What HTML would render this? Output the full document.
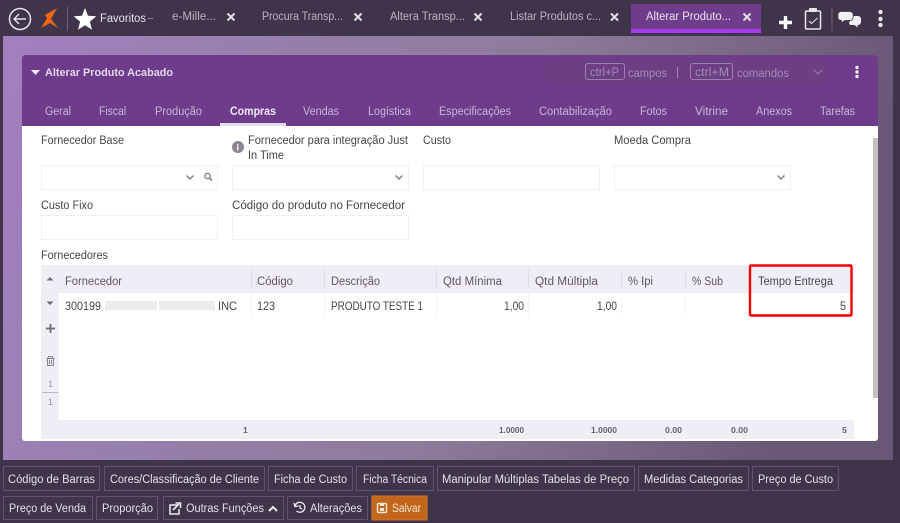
<!DOCTYPE html>
<html lang="pt"><head><meta charset="utf-8"><title>Alterar Produto Acabado</title>
<style>
html,body{margin:0;padding:0;width:900px;height:523px;overflow:hidden;background:#40344a}
svg{display:block;filter:blur(.35px)}
text{font-family:"Liberation Sans",sans-serif;font-size:11.5px}
.top{fill:#b9b2bf;font-size:11.5px}
.tab{fill:#c9b6d6;font-size:11.5px;font-weight:normal}
.lab{fill:#44444c;font-size:11.5px}
.hd{fill:#5c5763;font-size:11.5px}
.cell{fill:#44444a;font-size:11.5px}
.ft{fill:#66626b;font-size:8.5px;font-weight:bold}
.btn{fill:#e4e0e8;font-size:11.5px}
.bb{fill:none;stroke:#5f5569;stroke-width:1}
.inp{fill:#fff;stroke:#f1eff8;stroke-width:1}
.sep{stroke:#dedbe2;stroke-width:1}
.dot{stroke:#e8e6ea;stroke-width:1;stroke-dasharray:1 1}
.x{stroke:#e4e0e8;stroke-width:2;fill:none}
.chev{stroke:#85808a;stroke-width:1.5;fill:none}
.hint{fill:#a48bb6;font-size:11.5px}
</style></head><body>
<svg width="900" height="523" viewBox="0 0 900 523" xmlns="http://www.w3.org/2000/svg">
<defs>
<linearGradient id="bg" x1="0" y1="0" x2="1" y2="0.15"><stop offset="0" stop-color="#a37fc1"/><stop offset=".25" stop-color="#9780ae"/><stop offset=".6" stop-color="#8d7b9a"/><stop offset="1" stop-color="#695875"/></linearGradient>
</defs>
<rect width="900" height="523" fill="#40344a"/>
<rect x="3" y="36" width="890" height="424" fill="url(#bg)"/>

<!-- top bar -->
<circle cx="20" cy="19" r="10.500" fill="none" stroke="#e6e3e8" stroke-width="1.500"/>
<path d="M26 19H14M19 14l-5 5 5 5" fill="none" stroke="#e6e3e8" stroke-width="1.400"/>
<path d="M41 28l6-10-2-3 12-7-6 11 7 9-8-5z" fill="#f0660f"/>
<line x1="67.500" y1="7" x2="67.500" y2="31" stroke="#6d6376"/>
<path d="M85 8l3 7.800 8.300.5-6.400 5.300 2.100 8.100-7-4.500-7 4.500 2.100-8.100-6.400-5.300 8.300-.5z" fill="#fff"/>
<text x="100" y="22" class="top" style="fill:#e6e3e8" textLength="46" lengthAdjust="spacingAndGlyphs">Favoritos</text>
<rect x="148" y="18" width="5" height="1" fill="#8e8496"/>
<text x="172" y="20" class="top" textLength="44" lengthAdjust="spacingAndGlyphs">e-Mille...</text>
<path class="x" d="M227.500 13.500l7 7m0-7l-7 7"/>
<text x="262" y="20" class="top" textLength="81" lengthAdjust="spacingAndGlyphs">Procura Transp...</text>
<path class="x" d="M354.500 13.500l7 7m0-7l-7 7"/>
<text x="390" y="20" class="top" textLength="75" lengthAdjust="spacingAndGlyphs">Altera Transp...</text>
<path class="x" d="M474.500 13.500l7 7m0-7l-7 7"/>
<text x="510" y="20" class="top" textLength="91" lengthAdjust="spacingAndGlyphs">Listar Produtos c...</text>
<path class="x" d="M611 13.500l7 7m0-7l-7 7"/>
<rect x="631" y="4" width="130" height="29" fill="#6f3b8b"/>
<rect x="631" y="29" width="130" height="4" fill="#a63ef0"/>
<text x="646" y="20" class="top" style="fill:#e8e2ec" textLength="85" lengthAdjust="spacingAndGlyphs">Alterar Produto...</text>
<path class="x" d="M743.500 13.500l7 7m0-7l-7 7"/>
<path d="M785.500 16v13M779 22.500h13" stroke="#fff" stroke-width="3.400" fill="none"/>
<rect x="805.500" y="11" width="15" height="18" rx="1" fill="none" stroke="#e8e6ea" stroke-width="1.500"/>
<rect x="809" y="8" width="8" height="4" rx="1" fill="#e8e6ea"/>
<path d="M809 21l2.500 2.500 6-5.500" fill="none" stroke="#e8e6ea" stroke-width="1"/>
<line x1="832" y1="7" x2="832" y2="31" stroke="#6d6376"/>
<path d="M851.500 16h6.500a3 3 0 0 1 3 3v3a3 3 0 0 1-3 3h-.5v2.500l-3-2.500H851a2.500 2.500 0 0 1-2-1z" fill="#f2f0f4"/>
<path d="M841 11.500h9a3.200 3.200 0 0 1 3.200 3.200v2.600a3.200 3.200 0 0 1-3.200 3.200h-5.500l-3 2.500v-2.500H841a3.200 3.200 0 0 1-3.200-3.200v-2.600a3.200 3.200 0 0 1 3.200-3.200z" fill="#f2f0f4" stroke="#40344a" stroke-width=".8"/>
<circle cx="880.500" cy="12" r="2.200" fill="#e8e6ea"/><circle cx="880.500" cy="19" r="2.200" fill="#e8e6ea"/><circle cx="880.500" cy="25" r="2.200" fill="#e8e6ea"/>

<!-- card -->
<rect x="22" y="55" width="856" height="386" rx="3" fill="#fff"/>
<path d="M22 126V58a3 3 0 0 1 3-3h850a3 3 0 0 1 3 3v68z" fill="#6f3b8b"/>
<path d="M31 70h9l-4.500 5z" fill="#f0e8f4"/>
<text x="45" y="76" style="fill:#e2d6ea;font-weight:bold;font-size:11px" textLength="128" lengthAdjust="spacingAndGlyphs">Alterar Produto Acabado</text>
<rect x="544" y="61" width="283" height="22" rx="3" fill="#6c3f85"/>
<rect x="585.500" y="63.500" width="39" height="16" rx="2.500" fill="none" stroke="#9a80ad"/>
<text x="590" y="76" class="hint" textLength="29" lengthAdjust="spacingAndGlyphs">ctrl+P</text>
<text x="628" y="77" class="hint" textLength="39" lengthAdjust="spacingAndGlyphs">campos</text>
<text x="676" y="76" class="hint">|</text>
<rect x="690.500" y="63.500" width="42" height="16" rx="2.500" fill="none" stroke="#9a80ad"/>
<text x="695" y="76" class="hint" textLength="34" lengthAdjust="spacingAndGlyphs">ctrl+M</text>
<text x="737" y="77" class="hint" textLength="52" lengthAdjust="spacingAndGlyphs">comandos</text>
<path d="M814 70l4 4 4-4" fill="none" stroke="#8f75a3" stroke-width="1.400"/>
<circle cx="857" cy="67.500" r="1.700" fill="#eee"/><circle cx="857" cy="72" r="1.700" fill="#eee"/><circle cx="857" cy="76.500" r="1.700" fill="#eee"/>

<text x="45" y="115" class="tab" textLength="26" lengthAdjust="spacingAndGlyphs">Geral</text>
<text x="99" y="115" class="tab" textLength="27" lengthAdjust="spacingAndGlyphs">Fiscal</text>
<text x="155" y="115" class="tab" textLength="47" lengthAdjust="spacingAndGlyphs">Produção</text>
<text x="230" y="115" class="tab" style="fill:#f0e8f4;font-weight:bold" textLength="46" lengthAdjust="spacingAndGlyphs">Compras</text>
<text x="303" y="115" class="tab" textLength="36" lengthAdjust="spacingAndGlyphs">Vendas</text>
<text x="368" y="115" class="tab" textLength="43" lengthAdjust="spacingAndGlyphs">Logística</text>
<text x="439" y="115" class="tab" textLength="72" lengthAdjust="spacingAndGlyphs">Especificações</text>
<text x="539" y="115" class="tab" textLength="73" lengthAdjust="spacingAndGlyphs">Contabilização</text>
<text x="640" y="115" class="tab" textLength="27" lengthAdjust="spacingAndGlyphs">Fotos</text>
<text x="695" y="115" class="tab" textLength="33" lengthAdjust="spacingAndGlyphs">Vitrine</text>
<text x="756" y="115" class="tab" textLength="36" lengthAdjust="spacingAndGlyphs">Anexos</text>
<text x="820" y="115" class="tab" textLength="35" lengthAdjust="spacingAndGlyphs">Tarefas</text>
<rect x="220" y="123" width="66" height="3" fill="#e8dfee"/>

<!-- scrollbar -->
<rect x="873" y="138" width="5" height="260" fill="#c2c2c2"/>

<!-- form -->
<text x="41" y="144" class="lab" textLength="83" lengthAdjust="spacingAndGlyphs">Fornecedor Base</text>
<circle cx="238" cy="147" r="6" fill="#8d8596"/>
<text x="236.500" y="150.500" style="fill:#fff;font-size:9px;font-weight:bold">i</text>
<text x="248" y="144" class="lab" textLength="160" lengthAdjust="spacingAndGlyphs">Fornecedor para integração Just</text>
<text x="248" y="159" class="lab" textLength="36" lengthAdjust="spacingAndGlyphs">In Time</text>
<text x="423" y="144" class="lab" textLength="28" lengthAdjust="spacingAndGlyphs">Custo</text>
<text x="614" y="144" class="lab" textLength="77" lengthAdjust="spacingAndGlyphs">Moeda Compra</text>
<rect class="inp" x="41.500" y="165.500" width="176" height="24"/>
<rect class="inp" x="232.500" y="165.500" width="176" height="24"/>
<rect class="inp" x="423.500" y="165.500" width="176" height="24"/>
<rect class="inp" x="614.500" y="165.500" width="176" height="24"/>
<path class="chev" d="M186.500 175.500l3.500 3.500 3.500-3.500M395.500 175.500l3.500 3.500 3.500-3.500M777.500 175.500l3.500 3.500 3.500-3.500"/>
<circle cx="207.500" cy="176" r="2.700" fill="none" stroke="#85808a" stroke-width="1.400"/>
<path d="M209.500 178l2.500 2.500" stroke="#85808a" stroke-width="1.600"/>
<text x="41" y="209" class="lab" textLength="52" lengthAdjust="spacingAndGlyphs">Custo Fixo</text>
<text x="232" y="209" class="lab" textLength="173" lengthAdjust="spacingAndGlyphs">Código do produto no Fornecedor</text>
<rect class="inp" x="41.500" y="215.500" width="176" height="24"/>
<rect class="inp" x="232.500" y="215.500" width="176" height="24"/>
<text x="41" y="259" class="lab" textLength="67" lengthAdjust="spacingAndGlyphs">Fornecedores</text>

<!-- grid -->
<rect x="41" y="265" width="813" height="174" rx="2" fill="#f1edf7"/>
<rect x="59" y="293" width="795" height="127" fill="#fff"/>
<g>
<line class="sep" x1="251.500" y1="270" x2="251.500" y2="288"/><line class="sep" x1="324.500" y1="270" x2="324.500" y2="288"/><line class="sep" x1="436.500" y1="270" x2="436.500" y2="288"/><line class="sep" x1="528.500" y1="270" x2="528.500" y2="288"/><line class="sep" x1="621.500" y1="270" x2="621.500" y2="288"/><line class="sep" x1="685.500" y1="270" x2="685.500" y2="288"/>
<line class="dot" x1="251.500" y1="293" x2="251.500" y2="316"/><line class="dot" x1="324.500" y1="293" x2="324.500" y2="316"/><line class="dot" x1="436.500" y1="293" x2="436.500" y2="316"/><line class="dot" x1="528.500" y1="293" x2="528.500" y2="316"/><line class="dot" x1="621.500" y1="293" x2="621.500" y2="316"/><line class="dot" x1="685.500" y1="293" x2="685.500" y2="316"/>
</g>
<text x="65" y="285" class="hd" textLength="57" lengthAdjust="spacingAndGlyphs">Fornecedor</text>
<text x="257" y="285" class="hd" textLength="36" lengthAdjust="spacingAndGlyphs">Código</text>
<text x="331" y="285" class="hd" textLength="49" lengthAdjust="spacingAndGlyphs">Descrição</text>
<text x="443" y="285" class="hd" textLength="59" lengthAdjust="spacingAndGlyphs">Qtd Mínima</text>
<text x="535" y="285" class="hd" textLength="63" lengthAdjust="spacingAndGlyphs">Qtd Múltipla</text>
<text x="628" y="285" class="hd" textLength="25" lengthAdjust="spacingAndGlyphs">% Ipi</text>
<text x="692" y="285" class="hd" textLength="31" lengthAdjust="spacingAndGlyphs">% Sub</text>
<text x="758" y="285" class="hd" style="fill:#44444c" textLength="75" lengthAdjust="spacingAndGlyphs">Tempo Entrega</text>
<text x="65" y="310" class="cell" textLength="36" lengthAdjust="spacingAndGlyphs">300199</text>
<rect x="105" y="301" width="52" height="9" fill="#ececec"/><rect x="159" y="301" width="56" height="9" fill="#ececec"/>
<text x="218" y="310" class="cell" textLength="19" lengthAdjust="spacingAndGlyphs">INC</text>
<text x="257" y="310" class="cell" textLength="18" lengthAdjust="spacingAndGlyphs">123</text>
<text x="331" y="310" class="cell" textLength="92" lengthAdjust="spacingAndGlyphs">PRODUTO TESTE 1</text>
<text x="504" y="310" class="cell" textLength="20" lengthAdjust="spacingAndGlyphs">1,00</text>
<text x="597" y="310" class="cell" textLength="20" lengthAdjust="spacingAndGlyphs">1,00</text>
<text x="840" y="310" class="cell" textLength="6" lengthAdjust="spacingAndGlyphs">5</text>
<path d="M46.500 280.500l3.500-3.500 3.500 3.500z" fill="#6e6a74"/>
<path d="M46.500 301.500h7l-3.500 3.500z" fill="#6e6a74"/>
<path d="M50.500 324v9M46 328.500h9" stroke="#6e6a74" stroke-width="1.800" fill="none"/>
<path d="M46.500 358.500h8M48 358l.6-1.500h3.800L53 358M47.500 359v6.500h6V359M49.500 360v4M51.500 360v4" fill="none" stroke="#8a868f" stroke-width="1"/>
<text x="48" y="387" style="fill:#9a96a0;font-size:9px">1</text>
<rect x="42" y="392" width="16" height="1" fill="#bdb9c3"/>
<text x="48" y="405" style="fill:#9a96a0;font-size:9px">1</text>
<text x="243" y="433" class="ft">1</text>
<text x="499" y="433" class="ft" textLength="25" lengthAdjust="spacingAndGlyphs">1.0000</text>
<text x="591" y="433" class="ft" textLength="26" lengthAdjust="spacingAndGlyphs">1.0000</text>
<text x="665" y="433" class="ft" textLength="17" lengthAdjust="spacingAndGlyphs">0.00</text>
<text x="731" y="433" class="ft" textLength="17" lengthAdjust="spacingAndGlyphs">0.00</text>
<text x="842" y="433" class="ft">5</text>
<rect x="750" y="265.500" width="101.500" height="50" rx="1" fill="none" stroke="#f40000" stroke-width="2.400"/>

<!-- buttons -->
<g>
<rect class="bb" x="3.500" y="466.500" width="96" height="24"/>
<rect class="bb" x="104.500" y="466.500" width="160" height="24"/>
<rect class="bb" x="268.500" y="466.500" width="84" height="24"/>
<rect class="bb" x="356.500" y="466.500" width="77" height="24"/>
<rect class="bb" x="437.500" y="466.500" width="197" height="24"/>
<rect class="bb" x="638.500" y="466.500" width="110" height="24"/>
<rect class="bb" x="752.500" y="466.500" width="86" height="24"/>
<rect class="bb" x="3.500" y="496.500" width="89" height="23"/>
<rect class="bb" x="96.500" y="496.500" width="61" height="23"/>
<rect class="bb" x="163.500" y="496.500" width="120" height="23"/>
<rect class="bb" x="287.500" y="496.500" width="80" height="23"/>
<rect x="372" y="496" width="55" height="24" fill="#c2661c" stroke="#d27a30"/>
</g>
<text x="8" y="483" class="btn" textLength="87" lengthAdjust="spacingAndGlyphs">Código de Barras</text>
<text x="110" y="483" class="btn" textLength="149" lengthAdjust="spacingAndGlyphs">Cores/Classificação de Cliente</text>
<text x="274" y="483" class="btn" textLength="73" lengthAdjust="spacingAndGlyphs">Ficha de Custo</text>
<text x="363" y="483" class="btn" textLength="64" lengthAdjust="spacingAndGlyphs">Ficha Técnica</text>
<text x="442" y="483" class="btn" textLength="187" lengthAdjust="spacingAndGlyphs">Manipular Múltiplas Tabelas de Preço</text>
<text x="644" y="483" class="btn" textLength="99" lengthAdjust="spacingAndGlyphs">Medidas Categorias</text>
<text x="758" y="483" class="btn" textLength="75" lengthAdjust="spacingAndGlyphs">Preço de Custo</text>
<text x="9" y="512" class="btn" textLength="77" lengthAdjust="spacingAndGlyphs">Preço de Venda</text>
<text x="102" y="512" class="btn" textLength="51" lengthAdjust="spacingAndGlyphs">Proporção</text>
<path d="M178 505h-8v9h9v-5" fill="none" stroke="#eceaee" stroke-width="1.500"/>
<path d="M173 510l6-6M175.500 503h5v5" fill="none" stroke="#eceaee" stroke-width="1.600"/>
<text x="186" y="512" class="btn" textLength="78" lengthAdjust="spacingAndGlyphs">Outras Funções</text>
<path d="M269 511l4-4 4 4" fill="none" stroke="#f2f0f4" stroke-width="2"/>
<path d="M295 506a5 5 0 1 1 1.500 5M294 503l1 3.500 3.500-.5M300 505v3l2 1" fill="none" stroke="#eceaee" stroke-width="1.300"/>
<text x="310" y="512" class="btn" textLength="52" lengthAdjust="spacingAndGlyphs">Alterações</text>
<rect x="377.500" y="503.500" width="9" height="9" rx="1" fill="none" stroke="#f5e6d8" stroke-width="1.500"/>
<rect x="380" y="508" width="4" height="3" fill="#f5e6d8"/><rect x="380" y="504" width="4" height="2" fill="#f5e6d8"/>
<text x="392" y="512" class="btn" style="fill:#f2e0d0" textLength="29" lengthAdjust="spacingAndGlyphs">Salvar</text>
</svg>
</body></html>
